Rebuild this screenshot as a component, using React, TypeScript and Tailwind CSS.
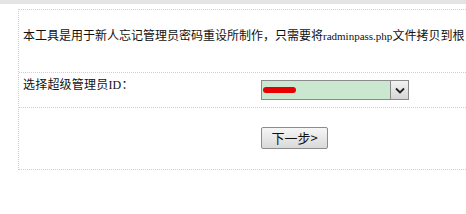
import React from "react";

export default function App() {
  const serif = { fontFamily: '"Liberation Serif", "Noto Sans CJK SC", serif' };
  return (
    <div className="w-[466px] h-[214px] bg-white overflow-hidden relative" style={serif}>
      <div className="h-[4px] bg-[#e4e4e4]" />
      <div className="ml-[18px] mt-[5px] w-[600px] border-l border-dotted border-[#cfcfcf]">
        <div className="border-t border-dotted border-[#cfcfcf] h-[63px] pt-[18px] pl-[4px] text-[12px] leading-[16px] text-[#111] whitespace-nowrap">
          本工具是用于新人忘记管理员密码重设所制作，只需要将<span className="text-[11px]">radminpass.php</span>文件拷贝到根
        </div>
        <div className="border-t border-dotted border-[#cfcfcf] h-[35px] flex">
          <div className="w-[242px] pl-[4px] pt-[4px] text-[12px] leading-[16px] text-[#111] tracking-[0.2px]">
            选择超级管理员ID：
          </div>
          <div className="pt-[7px]">
            <div className="w-[148px] h-[20px] flex border border-[#8a8a8a] bg-[#c9e8cf]">
              <div className="flex-1 flex items-center pl-[1px]">
                <div className="w-[33px] h-[6px] rounded-full bg-[#e60000]" />
              </div>
              <div className="w-[18px] h-full border-l border-[#8a8a8a] bg-gradient-to-b from-[#f2f2f2] to-[#d6d6d6] flex items-center justify-center">
                <svg width="10" height="7" viewBox="0 0 10 7">
                  <path d="M1 1.5 L5 5.5 L9 1.5" fill="none" stroke="#222" strokeWidth="1.8" />
                </svg>
              </div>
            </div>
          </div>
        </div>
        <div className="border-t border-dotted border-[#cfcfcf] h-[63px] flex border-b">
          <div className="w-[242px]" />
          <div className="pt-[19px]">
            <button
              className="w-[67px] h-[22px] rounded-[2px] border border-[#8c8c8c] bg-gradient-to-b from-[#f6f6f6] to-[#d9d9d9] text-[13px] leading-[20px] text-[#111] flex items-center justify-center"
              style={{ fontFamily: '"Noto Sans CJK SC", sans-serif' }}
            >
              下一步&gt;
            </button>
          </div>
        </div>
      </div>
    </div>
  );
}
